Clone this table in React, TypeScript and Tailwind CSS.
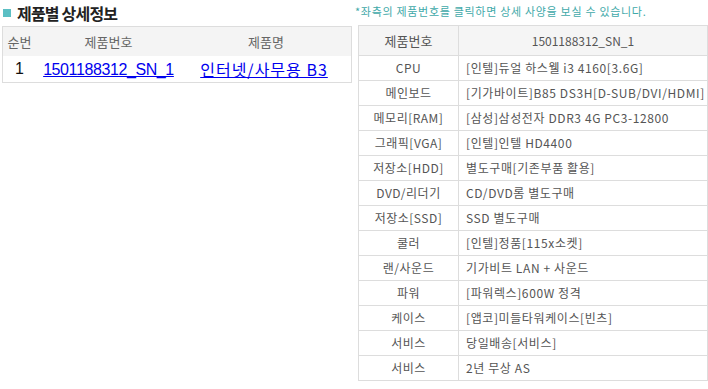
import React from "react";

const rows: [string, string][] = [
  ["CPU", "[인텔]듀얼 하스웰 i3 4160[3.6G]"],
  ["메인보드", "[기가바이트]B85 DS3H[D-SUB/DVI/HDMI]"],
  ["메모리[RAM]", "[삼성]삼성전자 DDR3 4G PC3-12800"],
  ["그래픽[VGA]", "[인텔]인텔 HD4400"],
  ["저장소[HDD]", "별도구매[기존부품 활용]"],
  ["DVD/리더기", "CD/DVD롬 별도구매"],
  ["저장소[SSD]", "SSD 별도구매"],
  ["쿨러", "[인텔]정품[115x소켓]"],
  ["랜/사운드", "기가비트 LAN + 사운드"],
  ["파워", "[파워렉스]600W 정격"],
  ["케이스", "[앱코]미들타워케이스[빈츠]"],
  ["서비스", "당일배송[서비스]"],
  ["서비스", "2년 무상 AS"],
];

const font = { fontFamily: '"Noto Sans CJK KR", "Noto Sans", sans-serif' };

export default function App() {
  return (
    <div className="w-[708px] h-[389px] bg-white flex text-[#555]" style={font}>
      <div className="w-[352px] pl-[2px] shrink-0">
        <div className="h-[26px] flex items-center gap-[6px] pl-[1px] pb-[1px]">
          <div className="w-[8px] h-[8px] bg-[#5bbfc4]" />
          <span className="text-[16px] font-bold text-[#222] tracking-[-0.8px] leading-none">제품별 상세정보</span>
        </div>
        <div className="w-[350px] border border-[#dddddd]">
          <div className="h-[29px] bg-[#f4f4f4] flex items-center text-[13px] text-[#666]">
            <div className="w-[33px] text-center">순번</div>
            <div className="w-[145px] text-center">제품번호</div>
            <div className="flex-1 text-center">제품명</div>
          </div>
          <div className="h-[26px] flex items-center text-[16px] leading-none">
            <div className="w-[33px] text-center text-[#111]" style={{ fontFamily: '"Liberation Sans", sans-serif' }}>1</div>
            <div className="w-[145px] text-center">
              <a href="#" className="text-[#0000ee] underline tracking-[-0.4px]" style={{ fontFamily: '"Liberation Sans", "Noto Sans CJK KR", sans-serif' }}>1501188312_SN_1</a>
            </div>
            <div className="flex-1 text-center pr-[4px]">
              <a href="#" className="text-[#0000ee] underline tracking-[1px]">인터넷/사무용 B3</a>
            </div>
          </div>
        </div>
      </div>
      <div className="flex-1 pl-[3px]">
        <div className="h-[25px] flex items-center text-[11px] text-[#3fa9a9] tracking-[0.7px] pb-[2px] whitespace-nowrap">
          *좌측의 제품번호를 클릭하면 상세 사양을 보실 수 있습니다.
        </div>
        <table className="ml-[3px] w-[350px] border-collapse text-[12px] text-[#555]">
          <tbody>
            <tr className="h-[30px] bg-[#f5f5f5]">
              <td className="w-[100px] border border-[#dddddd] text-center text-[13px]">제품번호</td>
              <td className="border border-[#dddddd] text-center">1501188312_SN_1</td>
            </tr>
            {rows.map(([k, v], i) => (
              <tr key={i} className="h-[25px]">
                <td className="border border-[#dddddd] text-center p-0 tracking-[0.5px]">{k}</td>
                <td className="border border-[#dddddd] pl-[7px] p-0 whitespace-nowrap tracking-[0.6px]">{v}</td>
              </tr>
            ))}
          </tbody>
        </table>
      </div>
    </div>
  );
}
